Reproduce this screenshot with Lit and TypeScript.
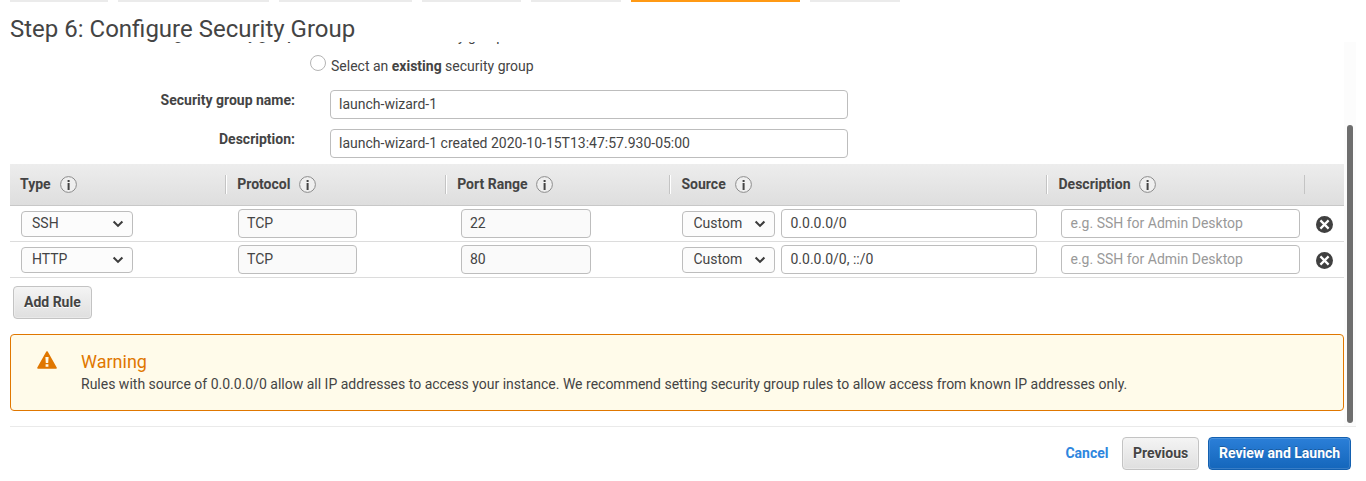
import { LitElement, html, css } from "lit";
import { customElement, property } from "lit/decorators.js";

const INFO = html`<svg class="info" width="17" height="17" viewBox="0 0 17 17">
  <circle cx="8.5" cy="8.5" r="7.9" fill="#efefef" stroke="#8c8c8c" stroke-width="1"></circle>
  <rect x="7.6" y="4" width="2" height="2" fill="#444"></rect>
  <rect x="7.6" y="7" width="2" height="7" fill="#444"></rect>
</svg>`;

const CHEVRON = html`<svg width="12" height="8" viewBox="0 0 12 8">
  <path d="M1.6 1.6 L6 5.9 L10.4 1.6" fill="none" stroke="#3c3c3c" stroke-width="2.1"></path>
</svg>`;

const REMOVE = html`<svg width="17" height="17" viewBox="0 0 17 17">
  <circle cx="8.5" cy="8.5" r="8.5" fill="#404040"></circle>
  <path d="M4.4 4.4 L12.6 12.6 M12.6 4.4 L4.4 12.6" stroke="#fff" stroke-width="2.2"></path>
</svg>`;

@customElement("rule-row")
class RuleRow extends LitElement {
  @property() type = "";
  @property() port = "";
  @property() source = "";

  static styles = css`
    :host { display: block; }
    * { box-sizing: border-box; }
    .row {
      display: flex; height: 36px; border-bottom: 1px solid #dcdcdc;
      padding-left: 11px;
    }
    .box {
      height: 29px; margin-top: 3px; border: 1px solid #bdbdbd; border-radius: 4px;
      padding: 0 8px; line-height: 26px; background: #fff; white-space: nowrap;
    }
    .off { background: #fafafa; }
    .pick {
      height: 26px; margin-top: 5px; border: 1px solid #bdbdbd; border-radius: 4px;
      padding: 0 8px 0 10px; line-height: 22px; background: #fcfcfc;
      display: flex; justify-content: space-between;
    }
    .pick svg { margin-top: 8px; }
    .w-type { width: 112px; margin-right: 105px; }
    .w-proto { width: 119px; margin-right: 104px; }
    .w-port { width: 130px; margin-right: 91px; }
    .w-kind { width: 93px; margin-right: 6px; padding-left: 10.5px; }
    .w-src { width: 256px; margin-right: 24px; padding-left: 8.5px; }
    .w-desc { width: 239px; margin-right: 16px; padding-left: 8.5px; color: #999; }
    .x { margin-top: 10px; height: 17px; }
    .x svg { display: block; }
  `;

  render() {
    return html`<div class="row">
      <div class="pick w-type"><span>${this.type}</span>${CHEVRON}</div>
      <div class="box off w-proto">TCP</div>
      <div class="box off w-port">${this.port}</div>
      <div class="pick w-kind"><span>Custom</span>${CHEVRON}</div>
      <div class="box w-src">${this.source}</div>
      <div class="box w-desc">e.g. SSH for Admin Desktop</div>
      <div class="x">${REMOVE}</div>
    </div>`;
  }
}

const TABS = [98, 151, 133, 99, 90, 169, 90];
const COLUMNS = [
  { name: "Type", width: 216 },
  { name: "Protocol", width: 220 },
  { name: "Port Range", width: 224 },
  { name: "Source", width: 377 },
  { name: "Description", width: 258 },
];

@customElement("app-root")
class AppRoot extends LitElement {
  static styles = css`
    :host {
      display: block; height: 481px; overflow: hidden; background: #fff;
      font: 14px/20px Roboto, sans-serif; color: #444;
    }
    * { box-sizing: border-box; }
    .tabs { display: flex; gap: 10px; padding-left: 10px; height: 2px; }
    .tab { background: #ebebeb; }
    .tab.on { background: #ff9914; }
    h1 {
      margin: 0; padding: 11px 0 0 10px; height: 40px; font-size: 24px;
      font-weight: 400; line-height: 32px; white-space: nowrap; color: #444;
    }
    .body { display: flex; height: 384px; }
    .content { width: 1334px; margin-left: 10px; overflow: hidden; }
    .field { display: flex; }
    .label { width: 285px; text-align: right; font-weight: 700; white-space: nowrap; }
    .first { height: 17px; margin-top: -17px; }
    .first .label { width: 289px; }
    .first .text { margin: 1px 0 0 32px; }
    .choice { display: flex; height: 48px; padding: 13px 0 0 300px; }
    .radio {
      width: 16px; height: 16px; border: 1px solid #b4b4b4; border-radius: 50%;
      margin-right: 5px;
    }
    .choice span { margin-top: 1px; }
    .entry { height: 39px; }
    .entry .input {
      width: 518px; height: 29px; margin-left: 35px; border: 1px solid #bdbdbd;
      border-radius: 4px; padding: 0 8px; line-height: 26px;
    }
    .head {
      display: flex; height: 42px; margin-top: -4px; border-bottom: 1px solid #c8c8c8;
      background: linear-gradient(#ededed, #dedede); font-weight: 700;
    }
    .col { display: flex; padding: 10px 0 0 10px; position: relative; }
    .col + .col { padding-left: 11.2px; }
    .col:nth-child(n + 4) { padding-left: 11.5px; }
    .col::after {
      content: ""; position: absolute; right: 0; top: 11px; width: 1px; height: 19px;
      background: #c4c4c4; box-shadow: 1px 0 #fff;
    }
    .col:last-child::after { box-shadow: none; }
    .info { margin: 2px 0 0 9px; }
    .col + .col .info { margin-left: 8.5px; }
    .col:nth-child(4) .info { margin-left: 9px; }
    .button {
      height: 33px; border: 1px solid #c3c3c3; border-radius: 4px; padding: 0 10px;
      line-height: 30px; font-weight: 700; white-space: nowrap;
      background: linear-gradient(#f4f4f4, #dfdfdf); box-shadow: inset 0 0 0 1px #f3f3f380;
      text-shadow: 0 1px #fff;
    }
    .add { width: 79px; margin: 8px 0 0 3px; }
    .alert {
      display: flex; height: 77px; margin-top: 15px; border: 1px solid #e07700;
      border-radius: 4px; background: #fffbea; padding: 16px 26px;
    }
    .alert .copy { margin-left: 24px; }
    .alert .title { color: #e07700; font-size: 18px; line-height: 22px; }
    .alert .msg { line-height: 22px; white-space: nowrap; }
    .rail { width: 12px; background: #fcfcfc; padding: 83px 3px 0 3px; }
    .thumb { width: 6px; height: 298px; border-radius: 3px; background: #6e6e6e; }
    .foot {
      display: flex; justify-content: flex-end; margin: 0 10px; border-top: 1px solid #eaeaea;
      padding: 10px 5px 0 0;
    }
    .cancel { color: #2e86de; font-weight: 700; line-height: 32px; margin-right: 13.5px; }
    .prev { width: 77px; margin-right: 9px; }
    .go {
      width: 143px; color: #fff; border-color: #1360b0; text-shadow: 0 -1px #00000040;
      background: linear-gradient(#2b7fd8, #1466bb); box-shadow: inset 0 0 0 1px #ffffff26;
    }
  `;

  render() {
    return html`
      <div class="tabs">
        ${TABS.map((w, i) => html`<div class="tab ${i === 5 ? "on" : ""}" style="width:${w}px"></div>`)}
      </div>
      <h1>Step 6: Configure Security Group</h1>
      <div class="body">
        <div class="content">
          <div class="field first">
            <div class="label">Assign a security group:</div>
            <div class="text">Create a <b>new</b> security group</div>
          </div>
          <div class="choice"><div class="radio"></div><span>Select an <b>existing</b> security group</span></div>
          <div class="field entry">
            <div class="label">Security group name:</div>
            <div class="input">launch-wizard-1</div>
          </div>
          <div class="field entry">
            <div class="label">Description:</div>
            <div class="input">launch-wizard-1 created 2020-10-15T13:47:57.930-05:00</div>
          </div>
          <div class="head">
            ${COLUMNS.map((c) => html`<div class="col" style="width:${c.width}px">${c.name}${INFO}</div>`)}
          </div>
          <rule-row type="SSH" port="22" source="0.0.0.0/0"></rule-row>
          <rule-row type="HTTP" port="80" source="0.0.0.0/0, ::/0"></rule-row>
          <div class="button add">Add Rule</div>
          <div class="alert">
            <svg width="20" height="18" viewBox="0 0 20 18">
              <path d="M10 1 L19 17 H1 Z" fill="#e07700" stroke="#e07700" stroke-width="1.6" stroke-linejoin="round"></path>
              <path d="M8.4 6 H11.6 L11.2 12 H8.8 Z M8.6 13.2 H11.4 V15.8 H8.6 Z" fill="#fffbea"></path>
            </svg>
            <div class="copy">
              <div class="title">Warning</div>
              <div class="msg">Rules with source of 0.0.0.0/0 allow all IP addresses to access your instance. We recommend setting security group rules to allow access from known IP addresses only.</div>
            </div>
          </div>
        </div>
        <div class="rail"><div class="thumb"></div></div>
      </div>
      <div class="foot">
        <div class="cancel">Cancel</div>
        <div class="button prev">Previous</div>
        <div class="button go">Review and Launch</div>
      </div>
    `;
  }
}
